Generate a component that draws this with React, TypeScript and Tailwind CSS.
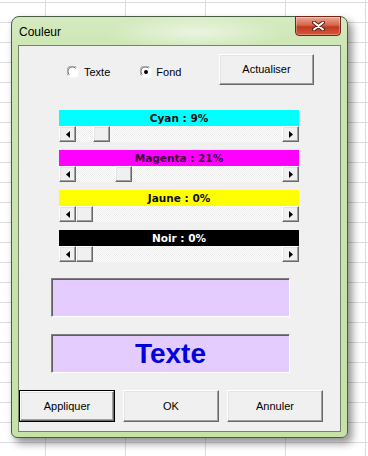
import React from "react";

const bars = [
  { name: "Cyan", pct: 9, bg: "bg-[#00ffff]", fg: "text-[#111]" },
  { name: "Magenta", pct: 21, bg: "bg-[#ff00ff]", fg: "text-[#3a0040]" },
  { name: "Jaune", pct: 0, bg: "bg-[#ffff00]", fg: "text-[#111]" },
  { name: "Noir", pct: 0, bg: "bg-black", fg: "text-white" },
];

const raised =
  "bg-[#f0f0f0] border border-t-white border-l-white border-r-[#696969] border-b-[#696969] shadow-[inset_-1px_-1px_0_#a0a0a0,inset_1px_1px_0_#e3e3e3]";

function Arrow({ dir }: { dir: "left" | "right" }) {
  return (
    <div className={`w-[17px] h-[16px] flex items-center justify-center ${raised}`}>
      <svg width="4" height="7" viewBox="0 0 4 7">
        {dir === "left" ? (
          <path d="M4 0 L0 3.5 L4 7 Z" fill="#000" />
        ) : (
          <path d="M0 0 L4 3.5 L0 7 Z" fill="#000" />
        )}
      </svg>
    </div>
  );
}

function Radio({ checked }: { checked: boolean }) {
  return (
    <svg width="12" height="12" viewBox="0 0 12 12">
      <circle cx="6" cy="6" r="5.5" fill="#ffffff" />
      <path d="M1.2 9.4 A5.5 5.5 0 0 1 9.4 1.2" fill="none" stroke="#a0a0a0" strokeWidth="1" />
      <path d="M2.2 8.6 A4.4 4.4 0 0 1 8.6 2.2" fill="none" stroke="#555" strokeWidth="1" />
      <path d="M10.8 2.6 A5.5 5.5 0 0 1 2.6 10.8" fill="none" stroke="#ffffff" strokeWidth="1" />
      {checked && <circle cx="6" cy="6" r="2" fill="#000" />}
    </svg>
  );
}

function Bar({ name, pct, bg, fg }: (typeof bars)[number]) {
  const offset = Math.round(pct * 1.86);
  return (
    <div className="w-[240px] flex flex-col">
      <div
        className={`h-[16px] flex items-center justify-center ${bg} ${fg} font-['DejaVu_Sans',sans-serif] font-bold text-[10.5px] leading-none`}
      >
        {name} : {pct}%
      </div>
      <div className="h-[16px] flex">
        <Arrow dir="left" />
        <div className="flex-1 flex bg-[repeating-conic-gradient(#ffffff_0_25%,#ececec_0_50%)] [background-size:2px_2px]">
          <div className="shrink-0" style={{ width: offset }} />
          <div className={`w-[17px] h-[16px] ${raised}`} />
        </div>
        <Arrow dir="right" />
      </div>
    </div>
  );
}

function Btn({ label, def }: { label: string; def?: boolean }) {
  return (
    <div
      className={`w-[96px] h-[32px] flex items-center justify-center text-[11px] text-black ${
        def ? "border border-black" : ""
      }`}
    >
      <div className={`w-full h-full flex items-center justify-center ${raised}`}>{label}</div>
    </div>
  );
}

export default function App() {
  return (
    <div className="w-[368px] h-[456px] overflow-hidden bg-white [background-image:linear-gradient(to_right,#dadcdd_1px,transparent_1px),linear-gradient(to_bottom,#dadcdd_1px,transparent_1px)] [background-size:80px_20px] [background-position:45px_2px] pl-[11px] pt-[16px] font-['Liberation_Sans',Arial,sans-serif]">
      <div className="w-[337px] h-[422px] flex flex-col rounded-t-[8px] rounded-b-[6px] border border-[#4a5a44] bg-[linear-gradient(to_bottom,#d4eac0,#cbe5b0_40px,#c6e2a6)] shadow-[4px_5px_9px_rgba(0,0,0,0.45)] px-[6px] pb-[5px]">
        <div className="h-[28px] flex justify-between items-start bg-[radial-gradient(ellipse_90px_18px_at_55%_55%,rgba(255,255,255,0.55),transparent)]">
          <div className="pl-[1px] pt-[9px] text-[12px] leading-[12px] text-black">Couleur</div>
          <div className="-mt-px w-[46px] h-[20px] rounded-b-[4px] border border-[#6e2619] bg-[linear-gradient(to_bottom,#e9a996,#d7654b_45%,#c2391f_55%,#d4573b)] flex items-center justify-center shadow-[inset_0_0_0_1px_rgba(255,255,255,0.3)]">
            <svg width="13" height="10" viewBox="0 0 13 10">
              <path d="M2 1.5 L11 8.5 M11 1.5 L2 8.5" stroke="#5a2418" strokeWidth="4" strokeLinecap="round" />
              <path d="M2 1.5 L11 8.5 M11 1.5 L2 8.5" stroke="#ffffff" strokeWidth="2" strokeLinecap="round" />
            </svg>
          </div>
        </div>
        <div className="flex-1 flex flex-col bg-[#f0f0f0] border border-[#73836c]">
          <div className="mt-[8px] flex items-center h-[31px]">
            <div className="w-[200px] flex items-center pl-[48px] pt-[5px] text-[11px] text-black">
              <div className="flex items-center gap-[5px]">
                <Radio checked={false} />
                <span>Texte</span>
              </div>
              <div className="flex items-center gap-[4px] ml-[30px]">
                <Radio checked={true} />
                <span>Fond</span>
              </div>
            </div>
            <div className={`w-[95px] h-[31px] flex items-center justify-center text-[11px] text-black ${raised}`}>
              Actualiser
            </div>
          </div>
          <div className="mt-[25px] pl-[40px] flex flex-col gap-[8px]">
            {bars.map((b) => (
              <Bar key={b.name} {...b} />
            ))}
          </div>
          <div className="mt-[16px] ml-[32px] w-[239px] h-[39px] bg-[#e5ccff] border border-t-[#808080] border-l-[#808080] border-r-white border-b-white shadow-[inset_1px_1px_0_#5f5f5f]" />
          <div className="mt-[17px] ml-[32px] w-[239px] h-[39px] bg-[#e5ccff] border border-t-[#808080] border-l-[#808080] border-r-white border-b-white shadow-[inset_1px_1px_0_#5f5f5f] flex items-center justify-center">
            <span className="font-['Liberation_Sans',Arial,sans-serif] font-bold text-[28px] leading-none text-[#0000dd]">
              Texte
            </span>
          </div>
          <div className="mt-[17px] flex gap-[8px]">
            <Btn label="Appliquer" def />
            <Btn label="OK" />
            <Btn label="Annuler" />
          </div>
        </div>
      </div>
    </div>
  );
}
